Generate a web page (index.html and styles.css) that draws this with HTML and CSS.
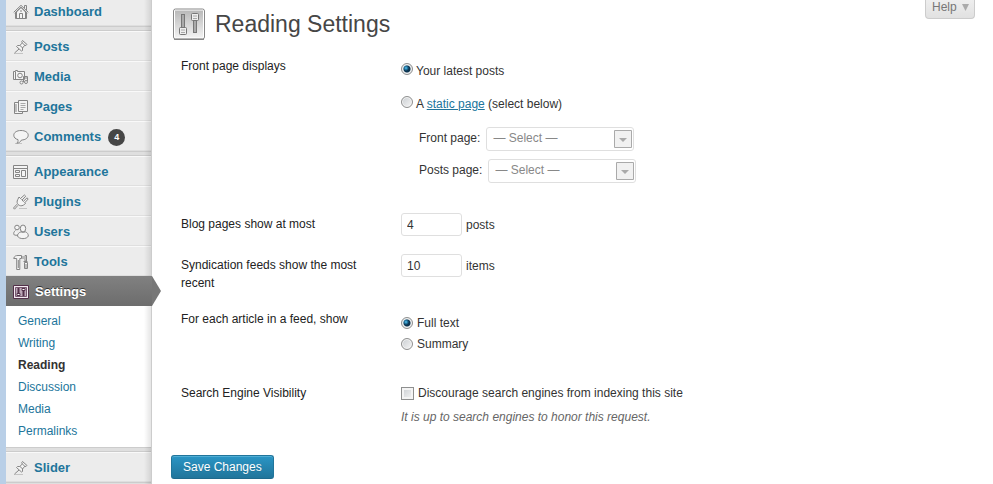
FILE: index.html
```html
<!DOCTYPE html>
<html lang="en">
<head>
<meta charset="utf-8">
<title>Reading Settings</title>
<link rel="stylesheet" href="styles.css">
</head>
<body>
<div class="layout">
  <nav class="sidebar">
    <ul class="menu">
      <li class="item first"><a href="#"><svg class="icon" viewBox="0 0 16 16"><path class="soft" d="M3.500 8v6.500h9V8L8 3.500z"/><path d="M.7 8.300 8 1.300l7.300 7M1.700 9.200 8 3.200l6.300 6M2.500 9v5.500h11V9M11.500 4V1.500h2V6M6.500 14V9.500h3V14M8 6v2"/></svg>Dashboard</a></li>
      <li class="separator"></li>
      <li class="item"><a href="#"><svg class="icon" viewBox="0 0 16 16"><path class="ground" d="M1 14.500h9"/><path class="soft" d="m9.500 1.500 4.500 4-1 1-1.200-.3L9.500 9v2.500l-1 .5L3.500 7.500 4.500 6.500h2.300L9.300 4 8.800 2.500z"/><path d="M6 10 1.500 14M7 6.500l3 2.800M9.300 4l2.500 2.200"/></svg>Posts</a></li>
      <li class="item"><a href="#"><svg class="icon" viewBox="0 0 16 16"><path class="soft" d="M.5 2.500h2v-1h2v1h7v8H.5z"/><path d="M2.500 3v7"/><circle class="soft" cx="7" cy="6.500" r="2.300"/><path d="M10.500 13V7.500h4V12M10.500 9h4"/><circle class="soft" cx="8.500" cy="13.500" r="1.500"/><circle class="soft" cx="13" cy="13" r="1.500"/></svg>Media</a></li>
      <li class="item"><a href="#"><svg class="icon" viewBox="0 0 16 16"><path class="soft" d="M5 3.500H1.500v11h8V13"/><path d="M3 5v8"/><path class="soft" d="M5.500 1.500h9v11h-9z"/><path class="thin" d="M7.500 4.500h5M7.500 6.500h5M7.500 8.500h5M7.500 10.500h3"/></svg>Pages</a></li>
      <li class="item"><a href="#"><svg class="icon" viewBox="0 0 16 16"><path class="ground" d="M2 14.500h7"/><path class="soft" d="M8 1.500c4.300 0 7.200 2 7.200 4.700S12.300 11 8.500 11c-.8 1.800-2.500 3-4.700 3.200C4.900 13.200 5.300 12 5 10.600 2.500 10 .8 8.500.8 6.200c0-2.700 2.900-4.700 7.200-4.700z"/></svg>Comments <span class="badge">4</span></a></li>
      <li class="separator"></li>
      <li class="item"><a href="#"><svg class="icon" viewBox="0 0 16 16"><path class="soft" d="M.5 1.500h14v13H.5z"/><path d="M.5 4.500h14M2.500 6.500h4v2h-4zM2.500 10.500h4v2h-4zM8.500 6.500h4v6h-4z"/></svg>Appearance</a></li>
      <li class="item"><a href="#"><svg class="icon" viewBox="0 0 16 16"><path class="ground" d="M6 14.500h8"/><path class="soft" d="m6 3 6.500 6.500-2.200 1.700c-1.800 1-3.600.7-5-.6s-1.600-3.200-.6-4.900z"/><path class="soft" d="m7.500 4.500 3.900-3.500 1.300 1.200-3.600 3.800M10.300 7.500 14 3.800l1.200 1.200-3.700 4M5 11.300 1.500 15.200.5 14 4 10.200"/></svg>Plugins</a></li>
      <li class="item"><a href="#"><svg class="icon" viewBox="0 0 16 16"><circle class="soft" cx="4" cy="3.500" r="2.300"/><path class="soft" d="M2.500 6.500C1 7.500.5 9 .8 10.500c1.500 1 3 1 4.500.2"/><ellipse class="soft" cx="10" cy="4.500" rx="2.700" ry="3.500"/><path class="soft" d="M8 7.800C6 8.500 4.500 10 4.500 12c1.500 3.500 9.500 3.500 10.800 0 0-2-.9-3.400-3-4.200-1.200.7-3.100.7-4.300 0z"/></svg>Users</a></li>
      <li class="item"><a href="#"><svg class="icon" viewBox="0 0 16 16"><path class="soft" d="M.7 4.500C1.200 2 3 1.500 5 1.500h3.500v3H6.800v11H3.700v-11z"/><path d="M5.300 6v8"/><path class="soft" d="M12 1.500h1.500V7H12zM11.500 8.500h3v6h-3z"/><path d="M10.500 7.500h4M13 10v4M10 2v3"/></svg>Tools</a></li>
      <li class="item current"><a href="#"><svg class="icon" viewBox="0 0 16 16"><path fill="#f3eaf1" stroke="#523049" d="M.5 1.500h15v13H.5z"/><path fill="#bda8b8" stroke="#785a70" d="M2.500 3.500h11v9h-11z"/><path stroke="#523049" stroke-width="2" d="M5.500 4v6M10.500 7v5"/><path fill="#fff" stroke="#523049" d="M4 9.500h3v2H4zM9 4.500h3v2H9z"/></svg>Settings</a>
        <svg class="pointer" viewBox="0 0 9 30" preserveAspectRatio="none"><path fill="#777" d="M0 0 9 15 0 30z"/></svg>
      </li>
    </ul>
    <ul class="submenu">
      <li><a href="#">General</a></li>
      <li><a href="#">Writing</a></li>
      <li><a class="active" href="#">Reading</a></li>
      <li><a href="#">Discussion</a></li>
      <li><a href="#">Media</a></li>
      <li><a href="#">Permalinks</a></li>
    </ul>
    <ul class="menu">
      <li class="separator"></li>
      <li class="item"><a href="#"><svg class="icon" viewBox="0 0 16 16"><path class="ground" d="M1 14.500h9"/><path class="soft" d="m9.500 1.500 4.500 4-1 1-1.200-.3L9.500 9v2.500l-1 .5L3.500 7.500 4.500 6.500h2.300L9.300 4 8.800 2.500z"/><path d="M6 10 1.500 14M7 6.500l3 2.800M9.300 4l2.500 2.200"/></svg>Slider</a></li>
      <li class="separator"></li>
    </ul>
  </nav>

  <main class="content">
    <header class="header">
      <svg class="page-icon" viewBox="0 0 32 32">
        <defs><linearGradient id="panel" x2="0" y2="1"><stop stop-color="#b9b9b9"/><stop offset="1" stop-color="#f2f2f2"/></linearGradient></defs>
        <rect x=".5" y="1" width="31" height="30" rx="2" fill="#fff" stroke="#888"/>
        <rect x="2" y="2.500" width="28" height="27" fill="url(#panel)"/>
        <path d="M1 31.300h30" stroke="#777"/>
        <rect x="8.500" y="6.500" width="3" height="14" fill="#aaa" stroke="#777"/>
        <rect x="6.500" y="19.500" width="7" height="7" rx="1" fill="#eee" stroke="#777"/>
        <path d="M8 22h4M8 24.500h4" stroke="#aaa"/>
        <rect x="20.500" y="11.500" width="3" height="13" fill="#aaa" stroke="#777"/>
        <rect x="18.500" y="5.500" width="7" height="7" rx="1" fill="#eee" stroke="#777"/>
        <path d="M20 8h4M20 10.500h4" stroke="#aaa"/>
      </svg>
      <h1>Reading Settings</h1>
      <button class="help" type="button">Help <svg viewBox="0 0 7 7"><path fill="#aaa" d="M0 0h7L3.500 7z"/></svg></button>
    </header>

    <form>
      <div class="row front">
        <div class="label" id="front">Front page displays</div>
        <div role="group" aria-labelledby="front">
          <div class="choice"><input type="radio" name="front" id="latest" checked><label for="latest">Your latest posts</label></div>
          <div class="choice"><input type="radio" name="front" id="static"><label for="static">A <a href="#">static page</a> (select below)</label></div>
          <div class="pick"><label for="fp">Front page:</label><span class="select"><select id="fp" disabled><option>— Select —</option></select><svg viewBox="0 0 18 18"><path fill="#f1f1f1" stroke="#aaa" d="M.5.500h17v17H.5z"/><path fill="#aaa" d="M5 8h8l-4 4z"/></svg></span></div>
          <div class="pick"><label for="pp">Posts page:</label><span class="select"><select id="pp" disabled><option>— Select —</option></select><svg viewBox="0 0 18 18"><path fill="#f1f1f1" stroke="#aaa" d="M.5.500h17v17H.5z"/><path fill="#aaa" d="M5 8h8l-4 4z"/></svg></span></div>
        </div>
      </div>
      <div class="row number">
        <label class="label" for="posts">Blog pages show at most</label>
        <div class="field"><input type="text" id="posts" value="4"><span>posts</span></div>
      </div>
      <div class="row number">
        <label class="label" for="items">Syndication feeds show the most recent</label>
        <div class="field"><input type="text" id="items" value="10"><span>items</span></div>
      </div>
      <div class="row feed">
        <div class="label" id="feed">For each article in a feed, show</div>
        <div role="group" aria-labelledby="feed">
          <div class="choice"><input type="radio" name="feed" id="full" checked><label for="full">Full text</label></div>
          <div class="choice"><input type="radio" name="feed" id="summary"><label for="summary">Summary</label></div>
        </div>
      </div>
      <div class="row visibility">
        <div class="label">Search Engine Visibility</div>
        <div>
          <div class="choice"><input type="checkbox" id="discourage"><label for="discourage">Discourage search engines from indexing this site</label></div>
          <p class="note">It is up to search engines to honor this request.</p>
        </div>
      </div>
      <button class="save" type="submit">Save Changes</button>
    </form>
  </main>
</div>
</body>
</html>
```
FILE: styles.css
```css
* { box-sizing: border-box; }
body {
  margin: 0;
  background: #fff;
  color: #333;
  font: 12px/18px "Liberation Sans", Arial, sans-serif;
}
a { color: #21759b; }
ul { list-style: none; margin: 0; padding: 0; }
input, select, button { font: inherit; margin: 0; }

.layout {
  display: flex;
  height: 100vh;
  overflow: hidden;
  border-left: 6px solid #b9cfe7;
}
.sidebar {
  position: relative;
  flex: none;
  width: 146px;
  background: #ececec;
}
.sidebar::after {
  content: "";
  position: absolute;
  inset: 0 0 0 auto;
  width: 7px;
  border-right: 1px solid #ccc;
  background: linear-gradient(to right, rgba(0, 0, 0, 0), rgba(0, 0, 0, .1));
  pointer-events: none;
}
.item {
  height: 30px;
  border-top: 1px solid #f9f9f9;
  border-bottom: 1px solid #dfdfdf;
}
.item.first { margin-top: -4px; }
.item a {
  display: flex;
  align-items: center;
  gap: 5px;
  height: 28px;
  padding: 2px 0 0 7px;
  font-size: 13px;
  font-weight: bold;
  text-decoration: none;
}
.icon {
  width: 16px;
  height: 16px;
  fill: none;
  stroke: #858585;
}
.icon .soft { fill: #f4f4f4; }
.icon .ground { stroke: #c4c4c4; }
.icon .thin { stroke: #aaa; }
.badge {
  width: 17px;
  margin-left: 2px;
  border-radius: 9px;
  background: #464646;
  color: #fff;
  font-size: 9px;
  line-height: 17px;
  text-align: center;
}
.separator {
  height: 5px;
  border-top: 1px solid #ccc;
  border-bottom: 1px solid #ccc;
  background: #dfdfdf;
}
.item.current {
  position: relative;
  z-index: 1;
  border-color: #808080 #808080 #6d6d6d;
  background: linear-gradient(#808080, #6d6d6d);
}
.current a { color: #fff; text-shadow: 0 -1px 0 #333; gap: 6px; }
.pointer {
  position: absolute;
  top: -1px;
  left: 100%;
  width: 9px;
  height: 30px;
}
.submenu {
  padding: 4px 0 5px;
  background: #fff;
}
.submenu a {
  display: block;
  padding-left: 12px;
  line-height: 22px;
  text-decoration: none;
}
.submenu .active { color: #333; font-weight: bold; }

.content {
  flex: 1;
  padding: 0 18px 0 19px;
}
.header {
  display: flex;
  align-items: flex-start;
}
.page-icon {
  width: 32px;
  height: 32px;
  margin: 8px 10px 0 2px;
}
h1 {
  margin: 8px 0 7px;
  color: #464646;
  font-size: 23px;
  font-weight: normal;
  line-height: 32px;
}
.help {
  height: 19px;
  margin-left: auto;
  padding: 0 5px 4px 6px;
  border: 1px solid #ccc;
  border-top: 0;
  border-radius: 0 0 4px 4px;
  background: linear-gradient(#eee, #e1e1e1);
  color: #777;
  line-height: 14px;
}
.help svg { width: 7px; height: 7px; margin-left: 2px; }

.row {
  display: grid;
  grid-template-columns: 190px 1fr;
  column-gap: 30px;
  padding: 10px 0 10px 10px;
}
.label { color: #222; }
.choice {
  display: flex;
  align-items: center;
  gap: 4px;
}
input[type="radio"], input[type="checkbox"] {
  appearance: none;
  width: 12px;
  height: 12px;
  border: 1px solid #8e8f8f;
  background: linear-gradient(135deg, #c9cdd1, #f6f6f6);
  box-shadow: inset 0 0 0 1px #f4f4f4;
}
input[type="radio"] { border-radius: 50%; }
input[type="checkbox"] {
  width: 13px;
  height: 13px;
  box-shadow: inset 0 0 0 2px #f4f4f4;
}
input[type="radio"]:checked {
  background:
    radial-gradient(circle at 4px 4px, #7fd4f5 0, #2a8fc0 1px, transparent 3px),
    radial-gradient(circle, #0c3450 3px, #d8dde0 4px);
}
.front { padding-bottom: 13px; }
.front .choice {
  gap: 3px;
  margin-top: 5px;
  margin-bottom: 15px;
}
.front .choice input { margin-bottom: 4px; }
.pick {
  display: flex;
  align-items: center;
  gap: 6px;
  margin: -1px 0 9px 18px;
}
.pick label { padding-bottom: 2px; }
.select { display: grid; width: 148px; }
.select select, .select svg { grid-area: 1 / 1; }
.select select {
  appearance: none;
  height: 24px;
  padding: 0 6px 2px;
  border: 1px solid #dfdfdf;
  border-radius: 3px;
  background: #fff;
  color: #888;
  opacity: 1;
}
.select svg {
  width: 18px;
  height: 18px;
  margin-right: 2px;
  place-self: center end;
  pointer-events: none;
}
.number { padding-bottom: 12px; }
.field {
  display: flex;
  align-items: center;
  align-self: start;
  gap: 4px;
  margin: -2px 0;
}
.field input {
  width: 61px;
  height: 23px;
  padding: 0 5px;
  border: 1px solid #dfdfdf;
  border-radius: 3px;
  color: #333;
}
.number + .number { padding-bottom: 8px; }
.feed .choice { height: 21px; }
.feed [role="group"] { padding-top: 2px; }
.feed { padding-bottom: 20px; }
.note {
  margin: 6px 0 0;
  color: #666;
  font-style: italic;
}
.save {
  height: 24px;
  margin-top: 19px;
  padding: 0 11px;
  border: 1px solid #21759b;
  border-bottom-color: #1e6a8d;
  border-radius: 3px;
  background: linear-gradient(#2a95c5, #21759b);
  box-shadow: inset 0 1px 0 rgba(120, 200, 230, .5);
  color: #fff;
  text-shadow: 0 1px 0 rgba(0, 0, 0, .1);
}
```
